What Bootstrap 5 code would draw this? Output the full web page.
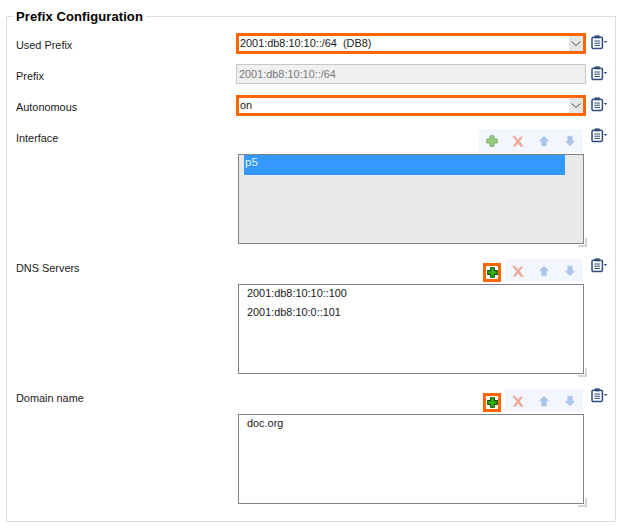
<!DOCTYPE html>
<html lang="en">
<head>
<meta charset="utf-8">
<title>Prefix Configuration</title>
<link href="https://cdn.jsdelivr.net/npm/bootstrap@5.3.0/dist/css/bootstrap.min.css" rel="stylesheet">
<style>
html,body{background:#fff;margin:0;height:528px;overflow:hidden}
body{font-family:"Liberation Sans",Arial,sans-serif;font-size:10.9px;color:#1a1a1a;line-height:14px}
.cfg-set{position:absolute;left:6px;top:9px;width:610px;height:513px;border:1px solid #dcdcdc;padding:0;margin:0;min-width:0}
.cfg-legend{float:none;width:auto;font-family:"Liberation Sans",Arial,sans-serif;font-size:13px;font-weight:700;line-height:15px;margin:0 0 0 6px;padding:0 3px;color:#000;letter-spacing:.1px}
.cfg-rows{padding:9px 0 0 9px}
.cfg-row{display:flex;align-items:flex-start}
.cfg-label{width:220px;flex:none;padding-top:5px}
.cfg-list-label{padding-top:2px}
.cfg-field{width:350px;flex:none}
.cfg-menu{width:20px;flex:none;margin-left:5px;display:flex;height:20px;padding-top:2px}
.cfg-menu-top{padding-top:0;margin-top:-1px}
.cfg-ctl{display:block;width:350px;height:21px;border-radius:0;padding:0 0 0 1px;font-size:10.9px;line-height:15px;color:#1a1a1a;box-shadow:none;font-family:inherit}
.cfg-sel{border:3px solid #f60;background-image:url("data:image/svg+xml,%3Csvg xmlns='http://www.w3.org/2000/svg' width='14' height='15'%3E%3Crect width='14' height='15' fill='%23e6e6e6'/%3E%3Cpath d='M2.500 5.500l4.500 4 4.500-4' fill='none' stroke='%23555' stroke-width='1'/%3E%3C/svg%3E");background-repeat:no-repeat;background-position:right 0 center;background-size:14px 15px}
.cfg-sel:focus{border-color:#f60;box-shadow:none}
.cfg-dis{border:1px solid #c8c8c8;background:#f0f0f0;color:#7b7b7b;padding-left:2px;height:20px}
.cfg-dis:disabled{background:#f0f0f0;color:#7b7b7b;opacity:1}
.cfg-tools{display:flex;justify-content:flex-end;height:23px;padding-right:3px;margin-bottom:2px}
.cfg-tool{width:26px;height:23px;display:flex;align-items:center;justify-content:center;background:#f3f6fc;border:0;padding:0}
.cfg-tool-on{background:transparent}
.cfg-hot{width:18px;height:19px;border:3px solid #f60;display:flex;align-items:center;justify-content:center;margin-top:3px}
.cfg-list{position:relative;margin:0 2px;height:90px;border:1px solid #808488;background:#fff;list-style:none;padding:0}
.cfg-list-dis{background:#e9e9e9;padding:0 18px 0 5px}
.cfg-sel-item{background:#3399ff;height:20px;color:#e6f1fc;padding:0 0 0 1px;font-size:11.5px}
.cfg-item{padding-left:8px;height:19px;line-height:17px}
.cfg-grip{position:absolute;right:-4px;bottom:-4px;width:9px;height:9px;border-right:2px solid #d4d4d4;border-bottom:2px solid #d4d4d4}
.cfg-gap-a{margin-top:10px}
.cfg-gap-b{margin-top:11px}
.cfg-gap-c{margin-top:13px}
.cfg-gap-d{margin-top:15px}
</style>
</head>
<body>
<svg width="0" height="0" class="d-block" aria-hidden="true">
<defs>
<symbol id="i-note" viewBox="0 0 17 15">
<rect x="1" y="2.200" width="10.400" height="11.400" rx="1.400" fill="#fff" stroke="#2f4a7d" stroke-width="1.500"/>
<rect x="3.700" y=".4" width="5" height="3" fill="#2f4a7d"/>
<path d="M3.400 6h5.600M3.400 8.200h5.600M3.400 10.400h5.600" stroke="#2f4a7d" stroke-width="1"/>
<path d="M12.700 6h3.600l-1.800 2z" fill="#2f4a7d"/>
</symbol>
<symbol id="i-plus-off" viewBox="0 0 12 12">
<path d="M4 .8h4V4h3.200v4H8v3.200H4V8H.8V4H4z" fill="#93d07c" stroke="#7fa87a" stroke-width="1"/>
</symbol>
<symbol id="i-plus-on" viewBox="0 0 12 12">
<path d="M4 .8h4V4h3.200v4H8v3.200H4V8H.8V4H4z" fill="#31b40d" stroke="#0d4d06" stroke-width="1.200"/>
</symbol>
<symbol id="i-x" viewBox="0 0 12 12">
<path d="M.4 1h2.400L6 4.800 8.600 1.800h2.200L7.600 6.300l3.800 5.200H8.600L6 8.200 3.400 11.500H1L4.600 6.300z" fill="#f2a497" stroke="#e9c2bb" stroke-width=".5"/>
</symbol>
<symbol id="i-up" viewBox="0 0 12 12">
<path d="M6 1l5 5H8.500v5h-5V6H1z" fill="#a9c5ee" stroke="#c3d3ea" stroke-width=".6"/>
</symbol>
<symbol id="i-down" viewBox="0 0 12 12">
<path d="M3.500 1h5v5H11l-5 5-5-5h2.500z" fill="#a9c5ee" stroke="#c3d3ea" stroke-width=".6"/>
</symbol>
</defs>
</svg>

<fieldset class="cfg-set">
<legend class="cfg-legend">Prefix Configuration</legend>
<div class="cfg-rows">

<div class="cfg-row">
<div class="cfg-label">Used Prefix</div>
<div class="cfg-field"><select class="form-select cfg-ctl cfg-sel"><option>2001:db8:10:10::/64&nbsp; (DB8)</option></select></div>
<div class="cfg-menu"><svg width="17" height="15"><use href="#i-note"/></svg></div>
</div>

<div class="cfg-row cfg-gap-a">
<div class="cfg-label">Prefix</div>
<div class="cfg-field"><input class="form-control cfg-ctl cfg-dis" disabled value="2001:db8:10:10::/64"></div>
<div class="cfg-menu"><svg width="17" height="15"><use href="#i-note"/></svg></div>
</div>

<div class="cfg-row cfg-gap-b">
<div class="cfg-label">Autonomous</div>
<div class="cfg-field"><select class="form-select cfg-ctl cfg-sel"><option>on</option></select></div>
<div class="cfg-menu"><svg width="17" height="15"><use href="#i-note"/></svg></div>
</div>

<div class="cfg-row cfg-gap-c">
<div class="cfg-label cfg-list-label">Interface</div>
<div class="cfg-field">
<div class="cfg-tools">
<span class="cfg-tool"><svg width="12" height="12"><use href="#i-plus-off"/></svg></span>
<span class="cfg-tool"><svg width="12" height="12"><use href="#i-x"/></svg></span>
<span class="cfg-tool"><svg width="12" height="12"><use href="#i-up"/></svg></span>
<span class="cfg-tool"><svg width="12" height="12"><use href="#i-down"/></svg></span>
</div>
<ul class="cfg-list cfg-list-dis"><li class="cfg-sel-item">p5</li><li class="cfg-grip"></li></ul>
</div>
<div class="cfg-menu cfg-menu-top"><svg width="17" height="15"><use href="#i-note"/></svg></div>
</div>

<div class="cfg-row cfg-gap-d">
<div class="cfg-label cfg-list-label">DNS Servers</div>
<div class="cfg-field">
<div class="cfg-tools">
<span class="cfg-tool cfg-tool-on"><span class="cfg-hot"><svg width="11" height="11"><use href="#i-plus-on"/></svg></span></span>
<span class="cfg-tool"><svg width="12" height="12"><use href="#i-x"/></svg></span>
<span class="cfg-tool"><svg width="12" height="12"><use href="#i-up"/></svg></span>
<span class="cfg-tool"><svg width="12" height="12"><use href="#i-down"/></svg></span>
</div>
<ul class="cfg-list"><li class="cfg-item">2001:db8:10:10::100</li><li class="cfg-item">2001:db8:10:0::101</li><li class="cfg-grip"></li></ul>
</div>
<div class="cfg-menu cfg-menu-top"><svg width="17" height="15"><use href="#i-note"/></svg></div>
</div>

<div class="cfg-row cfg-gap-d">
<div class="cfg-label cfg-list-label">Domain name</div>
<div class="cfg-field">
<div class="cfg-tools">
<span class="cfg-tool cfg-tool-on"><span class="cfg-hot"><svg width="11" height="11"><use href="#i-plus-on"/></svg></span></span>
<span class="cfg-tool"><svg width="12" height="12"><use href="#i-x"/></svg></span>
<span class="cfg-tool"><svg width="12" height="12"><use href="#i-up"/></svg></span>
<span class="cfg-tool"><svg width="12" height="12"><use href="#i-down"/></svg></span>
</div>
<ul class="cfg-list"><li class="cfg-item">doc.org</li><li class="cfg-grip"></li></ul>
</div>
<div class="cfg-menu cfg-menu-top"><svg width="17" height="15"><use href="#i-note"/></svg></div>
</div>

</div>
</fieldset>
<script src="https://cdn.jsdelivr.net/npm/bootstrap@5.3.0/dist/js/bootstrap.bundle.min.js"></script>
</body>
</html>
